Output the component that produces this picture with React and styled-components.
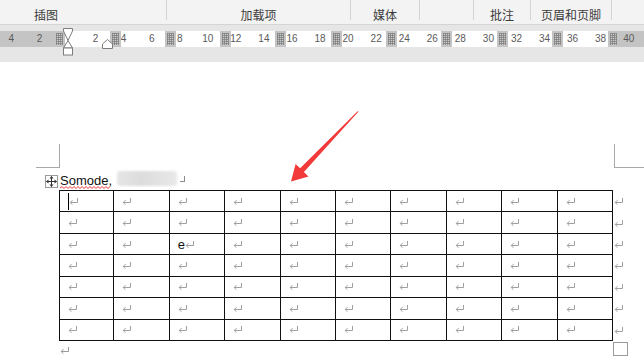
import React from 'react';
import styled, { createGlobalStyle } from 'styled-components';

const Global = createGlobalStyle`
  html, body { margin: 0; padding: 0; background: #fff; overflow: hidden; }
  #root { width: 644px; height: 362px; }
`;

const Screen = styled.div`
  position: relative;
  width: 644px;
  height: 362px;
  overflow: hidden;
  display: flex;
  flex-direction: column;
  font-family: "Liberation Sans", Arial, sans-serif;
`;

const Ribbon = styled.div`
  flex: none;
  height: 24px;
  display: flex;
  background: #f3f3f3;
  border-bottom: 1px solid #d5d5d5;
  overflow: hidden;
`;

const Group = styled.div`
  flex: none;
  box-sizing: border-box;
  width: ${(p) => p.$w}px;
  margin-left: ${(p) => p.$ml || 0}px;
  height: 20px;
  border-right: 1px solid ${(p) => (p.$last ? 'transparent' : '#d3d3d3')};
  padding-top: 8px;
  text-align: center;
  font-family: "Noto Sans CJK SC", sans-serif;
  font-size: 12px;
  line-height: 14px;
  color: #3c3c3c;
  white-space: nowrap;
`;

const RulerArea = styled.div`
  flex: none;
  box-sizing: border-box;
  height: 37px;
  padding-top: 6px;
  background: #e6e6e6;
`;

const Strip = styled.div`
  position: relative;
  height: 16px;
  background: linear-gradient(
    to right,
    #c4c4c4 59px,
    #fff 59px,
    #fff 613px,
    #c4c4c4 613px
  );
`;

const Num = styled.span`
  position: absolute;
  top: 0;
  line-height: 16px;
  font-size: 10px;
  color: #5a5a5a;
  transform: translateX(-50%);
`;

const ColMarker = styled.span`
  position: absolute;
  top: 0;
  width: 11px;
  height: 16px;
  margin-left: -5.5px;
  background: #c4c4c4;
  display: flex;
  align-items: center;
  justify-content: center;
`;

const Grip = styled.span`
  width: 7px;
  height: 12px;
  background-color: #cacaca;
  background-image: linear-gradient(90deg, rgba(110, 110, 110, 0.6) 1px, transparent 1px),
    linear-gradient(rgba(110, 110, 110, 0.6) 1px, transparent 1px);
  background-size: 2px 2px;
`;

const IndentMark = styled.svg`
  position: absolute;
  left: ${(p) => p.$x}px;
  top: ${(p) => p.$y}px;
  overflow: visible;
`;

const Page = styled.div`
  flex: 1;
  background: #fff;
  padding-top: 82px;
`;

const CornerRow = styled.div`
  display: flex;
  justify-content: space-between;
  height: 24px;
`;

const Corner = styled.div`
  box-sizing: border-box;
  width: ${(p) => p.$w}px;
  height: 24px;
  border-bottom: 1px solid #a8a8a8;
  ${(p) =>
    p.$side === 'left'
      ? 'margin-left: 36px; border-right: 1px solid #a8a8a8;'
      : 'border-left: 1px solid #a8a8a8;'}
`;

const TitleRow = styled.div`
  position: relative;
  z-index: 1;
  display: flex;
  align-items: flex-end;
  height: 22px;
  padding-left: 45px;
`;

const MoveHandle = styled.span`
  box-sizing: border-box;
  width: 13px;
  height: 13px;
  margin-bottom: 2px;
  border: 1px solid #9a9a9a;
  background: #fff;
  display: flex;
  align-items: center;
  justify-content: center;
`;

const Title = styled.span`
  margin-left: 2px;
  margin-bottom: 2px;
  font-size: 13px;
  line-height: 15px;
  color: #111;
`;

const Misspelt = styled.span`
  position: relative;
  display: inline-block;
`;

const Wave = styled.svg`
  position: absolute;
  left: 0;
  bottom: -1px;
`;

const Blur = styled.span`
  width: 60px;
  height: 15px;
  margin-left: 5px;
  margin-bottom: 4px;
  background: linear-gradient(to right, #e6e6e6, #dcdcdc 40%, #e2e2e2 70%, #e9e9e9);
  border-radius: 3px;
  filter: blur(1.2px);
`;

const TinyMark = styled.span`
  box-sizing: border-box;
  width: 5px;
  height: 6px;
  margin-left: 3px;
  margin-bottom: 8px;
  border-right: 1px solid #8a8a8a;
  border-bottom: 1px solid #8a8a8a;
`;

const Table = styled.div`
  position: relative;
  width: 554px;
  margin-left: 59px;
  border-top: 1px solid #111;
`;

const Row = styled.div`
  display: flex;
  height: 21.43px;
`;

const Cell = styled.div`
  flex: none;
  box-sizing: border-box;
  width: 55.4px;
  height: 21.43px;
  border-right: 1px solid #111;
  border-bottom: 1px solid #111;
  padding-left: 8px;
  display: flex;
  align-items: center;
  &:first-child {
    border-left: 1px solid #111;
  }
`;

const RowEnd = styled.div`
  flex: none;
  margin-left: 1px;
  display: flex;
  align-items: center;
`;

const Caret = styled.span`
  width: 1px;
  height: 17px;
  background: #000;
`;

const CellText = styled.span`
  font-size: 13px;
  line-height: 15px;
  color: #111;
`;

const Resize = styled.span`
  position: absolute;
  left: 554px;
  top: 151px;
  box-sizing: border-box;
  width: 15px;
  height: 14px;
  border: 1px solid #9a9a9a;
  background: #fff;
`;

const AfterLine = styled.div`
  padding-left: 60px;
  padding-top: 6px;
  display: flex;
`;

const Overlay = styled.svg`
  position: absolute;
  left: 0;
  top: 0;
  z-index: 2;
  pointer-events: none;
`;

const ReturnMark = ({ color = '#a0a0a0' }) => (
  <svg width="9" height="7" viewBox="0 0 9 7" style={{ display: 'block' }}>
    <path d="M8.5 0 V4.5 H1.2" fill="none" stroke={color} strokeWidth="1" />
    <path d="M3.6 2.1 L1.2 4.5 L3.6 6.9" fill="none" stroke={color} strokeWidth="1" />
  </svg>
);

const MoveIcon = () => (
  <svg width="11" height="11" viewBox="0 0 11 11">
    <g fill="none" stroke="#333" strokeWidth="1">
      <path d="M5.5 0.5 V10.5 M0.5 5.5 H10.5" />
    </g>
    <g fill="#333">
      <path d="M5.5 0 L3.5 2.5 H7.5 Z" />
      <path d="M5.5 11 L3.5 8.5 H7.5 Z" />
      <path d="M0 5.5 L2.5 3.5 V7.5 Z" />
      <path d="M11 5.5 L8.5 3.5 V7.5 Z" />
    </g>
  </svg>
);

const wavePath = (() => {
  let d = 'M0 2';
  for (let x = 0; x < 50; x += 4) d += ` L${x + 2} 0.5 L${x + 4} 2.5`;
  return d;
})();

const groups = [
  { w: 241, ml: -74, label: '插图' },
  { w: 184, label: '加载项' },
  { w: 69, label: '媒体' },
  { w: 54, label: '' },
  { w: 57, label: '批注' },
  { w: 81, label: '页眉和页脚' },
  { w: 60, label: '', last: true },
];

const nums = [];
for (let v = -4; v <= 40; v += 2) if (v !== 0) nums.push(v);
const bounds = [59, 115, 170, 225, 280, 336, 391, 446, 502, 557, 613];

const ROWS = 7;
const COLS = 10;

export default function App() {
  return (
    <>
      <Global />
      <Screen>
        <Ribbon>
          {groups.map((g, i) => (
            <Group key={i} $w={g.w} $ml={g.ml} $last={g.last}>
              {g.label}
            </Group>
          ))}
        </Ribbon>

        <RulerArea>
          <Strip>
            {nums.map((v) => (
              <Num key={v} style={{ left: 67.5 + v * 14.03 }}>
                {Math.abs(v)}
              </Num>
            ))}
            {bounds.map((b) => (
              <ColMarker key={b} style={{ left: b }}>
                <Grip />
              </ColMarker>
            ))}
            <IndentMark $x={102} $y={8} width="11" height="10" viewBox="0 0 11 10">
              <path d="M0.5 9.5 V5 L5.5 0.5 L10.5 5 V9.5 Z" fill="#fff" stroke="#7d7d7d" strokeWidth="1" />
            </IndentMark>
            <IndentMark $x={63} $y={-3} width="10" height="28" viewBox="0 0 10 28">
              <path d="M0.5 0.5 H9.5 V3 L5 12.5 L0.5 3 Z" fill="#fff" stroke="#7d7d7d" strokeWidth="1" />
              <path d="M5 12.5 L9.5 20 H0.5 Z" fill="#fff" stroke="#7d7d7d" strokeWidth="1" />
              <rect x="0.5" y="20" width="9" height="7" fill="#fff" stroke="#7d7d7d" strokeWidth="1" />
            </IndentMark>
          </Strip>
        </RulerArea>

        <Page>
          <CornerRow>
            <Corner $side="left" $w={24} />
            <Corner $side="right" $w={30} />
          </CornerRow>

          <TitleRow>
            <MoveHandle>
              <MoveIcon />
            </MoveHandle>
            <Title>
              <Misspelt>
                Somode
                <Wave width="50" height="3" viewBox="0 0 50 3">
                  <path d={wavePath} fill="none" stroke="#e52222" strokeWidth="0.9" />
                </Wave>
              </Misspelt>
              ,
            </Title>
            <Blur />
            <TinyMark />
          </TitleRow>

          <Table>
            {Array.from({ length: ROWS }).map((_, r) => (
              <Row key={r}>
                {Array.from({ length: COLS }).map((__, c) => (
                  <Cell key={c}>
                    {r === 0 && c === 0 && <Caret />}
                    {r === 2 && c === 2 && <CellText>e</CellText>}
                    <ReturnMark />
                  </Cell>
                ))}
                <RowEnd>
                  <ReturnMark />
                </RowEnd>
              </Row>
            ))}
            <Resize />
          </Table>

          <AfterLine>
            <ReturnMark color="#999" />
          </AfterLine>
        </Page>

        <Overlay width="644" height="362" viewBox="0 0 644 362">
          <polygon
            points="358.6,111.6 303.9,171.9 308.5,176.5 291,181.5 295.6,164 300.1,168.2 357.6,111.2"
            fill="#f23a3a"
          />
        </Overlay>
      </Screen>
    </>
  );
}
